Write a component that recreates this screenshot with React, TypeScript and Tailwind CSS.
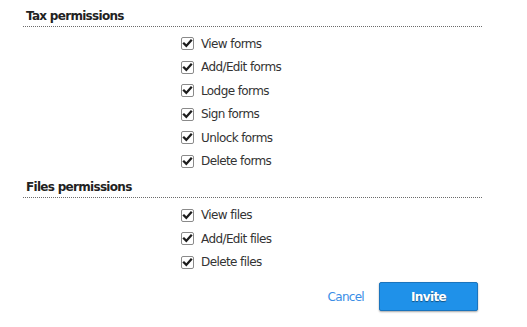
import React from "react";

const Check = () => (
  <span className="flex h-[13px] w-[13px] items-center justify-center rounded-[2px] border border-[#8a8a8a] bg-white shrink-0">
    <svg width="11" height="11" viewBox="0 0 11 11">
      <path d="M2 5.6 L4.3 7.9 L9 2.6" fill="none" stroke="#1c1c1c" strokeWidth="2.3" strokeLinecap="square" />
    </svg>
  </span>
);

const Row = ({ label }: { label: string }) => (
  <div className="flex h-[23.5px] items-center pl-[158px]">
    <Check />
    <span className="ml-[7px] text-[12px] text-[#333] tracking-[-0.6px]">{label}</span>
  </div>
);

const Heading = ({ title }: { title: string }) => (
  <div className="border-b border-dotted border-[#6b6b6b] pb-[2px] pl-[3px] text-[12px] font-bold leading-[16px] text-[#222] tracking-[-0.7px]">
    {title}
  </div>
);

export default function App() {
  return (
    <div
      className="h-[327px] w-[527px] bg-white pl-[23px] pr-[45px] pt-[8px]"
      style={{ fontFamily: '"DejaVu Sans", Verdana, sans-serif' }}
    >
      <Heading title="Tax permissions" />
      <div className="pt-[5px]">
        {["View forms", "Add/Edit forms", "Lodge forms", "Sign forms", "Unlock forms", "Delete forms"].map((l) => (
          <Row key={l} label={l} />
        ))}
      </div>
      <div className="mt-[5.5px]">
        <Heading title="Files permissions" />
      </div>
      <div className="pt-[6px]">
        {["View files", "Add/Edit files", "Delete files"].map((l) => (
          <Row key={l} label={l} />
        ))}
      </div>
      <div className="mt-[8px] flex items-center justify-end pr-[4px]">
        <button className="mr-[15px] text-[12px] text-[#3a8ee6] tracking-[-0.7px]">Cancel</button>
        <button className="h-[29px] w-[99px] rounded-[2px] border border-[#1a74bd] bg-[#1f91e9] text-[12px] font-bold text-white shadow-[0_1px_2px_rgba(0,0,0,0.35)] [text-shadow:0_1px_1px_rgba(0,0,0,0.45)] tracking-[-0.6px]">
          Invite
        </button>
      </div>
    </div>
  );
}
